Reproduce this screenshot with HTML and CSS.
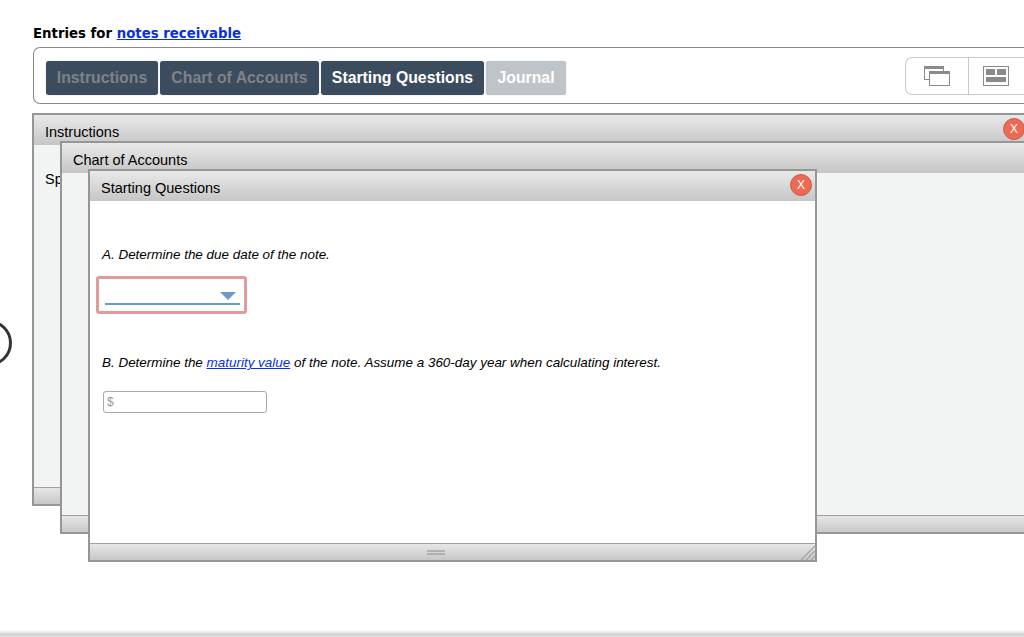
FILE: index.html
```html
<!DOCTYPE html>
<html lang="en">
<head>
<meta charset="utf-8">
<title>Entries for notes receivable</title>
<link rel="stylesheet" href="styles.css">
</head>
<body>
<svg class="ring" width="14" height="50" viewBox="0 0 14 50"><circle cx="-11" cy="25" r="21.5" fill="none" stroke="#333" stroke-width="3"/></svg>
<main class="page">
  <h1 class="heading">Entries for <a href="#">notes receivable</a></h1>
  <div class="toolbar">
    <nav class="tabs">
      <button class="tab dim">Instructions</button>
      <button class="tab dim">Chart of Accounts</button>
      <button class="tab active">Starting Questions</button>
      <button class="tab disabled">Journal</button>
    </nav>
    <div class="views">
      <div class="view">
        <svg class="view-icon" width="28" height="22" viewBox="0 0 28 22">
          <rect x="1.5" y="1.5" width="19" height="13" fill="#fff" stroke="#8a8a8a"/>
          <rect x="1" y="1" width="20" height="3" fill="#8a8a8a"/>
          <rect x="6.5" y="6.5" width="20" height="14" fill="#fff" stroke="#8a8a8a"/>
          <rect x="6" y="6" width="21" height="3" fill="#8a8a8a"/>
        </svg>
      </div>
      <div class="view">
        <svg width="28" height="22" viewBox="0 0 28 22">
          <rect x="1.5" y="1.5" width="25" height="19" fill="#fff" stroke="#8a8a8a"/>
          <rect x="4" y="4" width="9" height="6" fill="#8a8a8a"/>
          <rect x="15" y="4" width="9" height="6" fill="#8a8a8a"/>
          <rect x="4" y="12" width="20" height="5" fill="#8a8a8a"/>
        </svg>
      </div>
    </div>
  </div>
  <section class="window win-one">
    <header class="win-head">Instructions<span class="close">X</span></header>
    <div class="win-body"><p class="sp">Sp</p></div>
    <footer class="win-foot"></footer>
  </section>
  <section class="window win-two">
    <header class="win-head">Chart of Accounts</header>
    <div class="win-body"></div>
    <footer class="win-foot"></footer>
  </section>
  <section class="window win-three">
    <header class="win-head">Starting Questions<span class="close">X</span></header>
    <div class="win-body white">
      <p class="question q-a">A. Determine the due date of the note.</p>
      <div class="select-box"><div class="select-line"><span class="arrow"></span></div></div>
      <p class="question q-b">B. Determine the <a href="#">maturity value</a> of the note. Assume a 360-day year when calculating interest.</p>
      <div class="money">$</div>
    </div>
    <footer class="win-foot">
      <span class="grip"></span>
      <svg class="resize" width="15" height="15" viewBox="0 0 15 15">
        <path d="M1 15 15 1M6 15 15 6M11 15 15 11" stroke="#a2a2a2" stroke-width="1.2" fill="none"/>
      </svg>
    </footer>
  </section>
</main>
<div class="bottom-edge"></div>
</body>
</html>
```

FILE: styles.css
```css
* { box-sizing: border-box; }
html, body { margin: 0; height: 637px; overflow: hidden; background: #fff; }
body { position: relative; font-family: "Liberation Sans", Arial, sans-serif; color: #000; }
.page { padding: 25px 0 0 33px; }
.heading { margin: 0 0 4px; height: 18px; font: bold 13.3px/18px "DejaVu Sans", Verdana, sans-serif; color: #000; }
.heading a { color: #0a2fe0; }
.toolbar { display: flex; justify-content: space-between; align-items: flex-start; height: 57px; border: 1px solid #888; border-right: 0; border-radius: 7px 0 0 7px; padding: 13px 0 0 12px; }
.tabs { display: flex; gap: 2px; }
.tab { height: 34px; padding: 0; border: 0; border-radius: 3px; background: #3b4c5e; font: bold 15.8px "Liberation Sans", Arial, sans-serif; white-space: nowrap; box-shadow: 0 0 1px #9aa4ae; }
.tab:nth-child(1) { width: 112px; }
.tab:nth-child(2) { width: 159px; }
.tab:nth-child(3) { width: 163px; }
.tab:nth-child(4) { width: 80px; }
.tab.dim { color: #7f8285; }
.tab.active { color: #fff; }
.tab.disabled { background: #bfc4c8; color: #fff; }
.views { display: flex; margin-top: -4px; width: 119px; height: 38px; border: 1px solid #c9c9c9; border-right: 0; border-radius: 7px 0 0 7px; }
.view { width: 62px; display: flex; align-items: center; justify-content: flex-start; padding-left: 17px; }
.view + .view { flex: 1; border-left: 1px solid #c9c9c9; padding-left: 13px; }
.window { position: absolute; display: flex; flex-direction: column; border: 2px solid #969696; background: #f2f4f3; }
.win-one { left: 32px; right: 0; top: 113px; height: 393px; border-right: 0; z-index: 1; }
.win-two { left: 60px; right: 0; top: 141px; height: 393px; border-right: 0; z-index: 2; }
.win-three { left: 88px; top: 169px; width: 729px; height: 393px; z-index: 3; }
.win-head { position: relative; flex: none; height: 30px; padding-left: 11px; font-size: 14.5px; line-height: 34px; background: linear-gradient(#e9e9e9, #c6c6c6); }
.win-body { flex: 1; position: relative; }
.win-body.white { background: #fff; }
.win-foot { position: relative; flex: none; height: 17px; border-top: 1px solid #a0a0a0; background: linear-gradient(#e6e6e6, #c8c8c8); }
.sp { margin: 0; padding: 26px 0 0 11px; font-size: 14.5px; line-height: 16px; }
.close { position: absolute; top: 3px; width: 22px; height: 22px; border-radius: 50%; background: #ec6a54; border: 1px solid #c5604f; color: #fff; font-size: 12px; line-height: 20px; text-align: center; }
.win-one .close { right: -1px; }
.win-three .close { left: 700px; }
.question { margin: 0; font-size: 13.45px; font-style: italic; line-height: 16px; }
.question a { color: #0a2fe0; }
.q-a { padding: 46px 0 0 12px; }
.select-box { margin: 13px 0 0 6px; width: 151px; height: 38px; border: 3px solid #e29b9b; border-radius: 3px; padding: 0 4px 0 6px; }
.select-line { position: relative; height: 26px; border-bottom: 2px solid #6a9acb; }
.arrow { position: absolute; right: 4px; top: 13px; width: 0; height: 0; border-left: 8px solid transparent; border-right: 8px solid transparent; border-top: 8px solid #6a9acb; }
.q-b { padding: 41px 0 0 12px; }
.money { margin: 20px 0 0 13px; width: 164px; height: 22px; border: 1px solid #aaa; border-radius: 3px; padding-left: 3px; font-size: 12px; line-height: 21px; color: #999; }
.grip { position: absolute; left: 337px; top: 6px; width: 18px; height: 5px; border-top: 2px solid #b0b0b0; border-bottom: 2px solid #b0b0b0; }
.resize { position: absolute; right: 0; bottom: 0; }
.ring { position: absolute; left: 0; top: 318px; }
.bottom-edge { position: absolute; left: 0; right: 0; bottom: 0; height: 7px; background: linear-gradient(#fff, #d2d2d2 65%, #e4e4e4); }
```
